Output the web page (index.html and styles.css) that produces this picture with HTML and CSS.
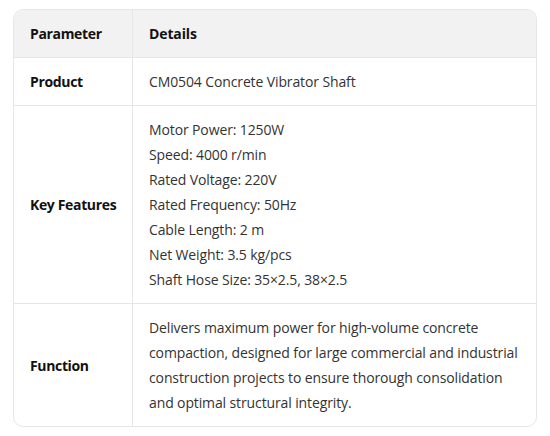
FILE: index.html
```html
<!DOCTYPE html>
<html>
<head>
<meta charset="utf-8">
<link rel="stylesheet" href="styles.css">
</head>
<body>
<div class="wrap">
  <table class="spec">
    <thead>
      <tr><th class="label">Parameter</th><th>Details</th></tr>
    </thead>
    <tbody>
      <tr><td class="label">Product</td><td>CM0504 Concrete Vibrator Shaft</td></tr>
      <tr>
        <td class="label">Key Features</td>
        <td>Motor Power: 1250W<br>Speed: 4000 r/min<br>Rated Voltage: 220V<br>Rated Frequency: 50Hz<br>Cable Length: 2 m<br>Net Weight: 3.5 kg/pcs<br>Shaft Hose Size: 35×2.5, 38×2.5</td>
      </tr>
      <tr>
        <td class="label">Function</td>
        <td>Delivers maximum power for high-volume concrete compaction, designed for large commercial and industrial construction projects to ensure thorough consolidation and optimal structural integrity.</td>
      </tr>
    </tbody>
  </table>
</div>
</body>
</html>
```
FILE: styles.css
```css
html, body { margin: 0; padding: 0; background: #fff; }
body { font-family: "Open Sans", "Noto Sans", sans-serif; font-size: 14px; color: #333; }
.wrap { padding: 9px 13px 0 13px; }
.spec {
  width: 524px;
  table-layout: fixed;
  border: 1px solid #e6e6e6;
  border-radius: 10px;
  border-spacing: 0;
  border-collapse: separate;
  overflow: hidden;
}
.spec th, .spec td {
  text-align: left;
  padding: 11px 16px;
  line-height: 25px;
  vertical-align: middle;
  border-left: 1px solid #e6e6e6;
  border-top: 1px solid #e6e6e6;
  letter-spacing: -0.12px;
}
.spec th:first-child, .spec td:first-child { border-left: none; }
.spec thead th { border-top: none; background: #f2f2f2; font-weight: 700; color: #111; }
.spec .label {
  width: 92px;
  padding-right: 10px;
  white-space: nowrap;
  font-weight: 700;
  color: #111;
  letter-spacing: -0.35px;
}
```
